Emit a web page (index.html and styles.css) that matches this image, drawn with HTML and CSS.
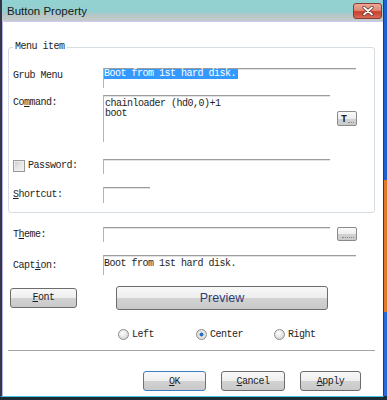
FILE: index.html
```html
<!DOCTYPE html>
<html lang="en">
<head>
<meta charset="UTF-8">
<title>Button Property</title>
<link rel="stylesheet" href="styles.css">
</head>
<body>
<div class="window">
    <div class="titlebar">
        <span class="title">Button Property</span>
        <span class="close">
            <svg width="14" height="10" viewBox="0 0 14 10">
                <path d="M3 1.5 L11 8.5 M11 1.5 L3 8.5" stroke="#5a2a24" stroke-width="3.2" stroke-linecap="round"/>
                <path d="M3 1.5 L11 8.5 M11 1.5 L3 8.5" stroke="#fff" stroke-width="1.8" stroke-linecap="round"/>
            </svg>
        </span>
    </div>

    <div class="content">
        <fieldset class="group">
            <legend>Menu item</legend>

            <div class="row row-grub">
                <label class="lbl">Grub Menu</label>
                <div class="edit wide"><span class="sel">Boot from 1st hard disk.</span></div>
            </div>

            <div class="row row-cmd">
                <label class="lbl">Co<u>m</u>mand:</label>
                <div class="edit area">chainloader (hd0,0)+1<br>boot</div>
                <button class="tiny t-btn">T<span class="dots"></span></button>
            </div>

            <div class="row row-pass">
                <label class="lbl check-lbl"><span class="checkbox"></span>Password:</label>
                <div class="edit medium"></div>
            </div>

            <div class="row row-short">
                <label class="lbl"><u>S</u>hortcut:</label>
                <div class="edit short"></div>
            </div>
        </fieldset>

        <div class="outer">
            <div class="row row-theme">
                <label class="lbl">T<u>h</u>eme:</label>
                <div class="edit medium"></div>
                <button class="tiny"><span class="dots"></span></button>
            </div>

            <div class="row row-caption">
                <label class="lbl">Capt<u>i</u>on:</label>
                <div class="edit wide caption">Boot from 1st hard disk.</div>
            </div>
        </div>

        <div class="btn-row">
            <button class="btn font-btn"><u>F</u>ont</button>
            <button class="btn preview-btn">Preview</button>
        </div>

        <div class="radios">
            <span class="radio"><span class="dot"></span>Left</span>
            <span class="radio"><span class="dot on"></span>Center</span>
            <span class="radio"><span class="dot"></span>Right</span>
        </div>

        <div class="separator"></div>

        <div class="actions">
            <button class="btn ok"><u>O</u>K</button>
            <button class="btn cancel"><u>C</u>ancel</button>
            <button class="btn apply"><u>A</u>pply</button>
        </div>
    </div>
</div>
</body>
</html>
```

FILE: styles.css
```css
body {
    margin: 0;
    height: 400px;
    background: linear-gradient(#1f5fd0 0, #1f5fd0 45%, #e07a2a 45%, #e07a2a 78%, #2a6ad8 78%, #2a6ad8 99%, #1e2a35 99%);
    font-family: "Liberation Mono", monospace;
    font-size: 10px;
    letter-spacing: -0.5px;
    color: #1e1e1e;
    overflow: hidden;
}
.window {
    width: 381px;
    height: 396px;
    background: #fff;
    border-left: 2px solid #34344a;
    border-right: 1px solid #2a3a60;
    border-bottom: 1px solid #46c6e0;
    box-shadow: inset 1px 0 0 #b4b4e4;
}
.titlebar {
    height: 21px;
    display: flex;
    align-items: center;
    justify-content: space-between;
    padding: 0 1px 0 5px;
    background: linear-gradient(#92d2d2 0, #94cfcf 55%, #b7c6c6 72%, #c6cbcb 100%);
    border-bottom: 1px solid #cacaf2;
}
.title {
    font-family: "Liberation Sans", Arial, sans-serif;
    font-size: 11.5px;
    letter-spacing: 0;
    color: #1a1a1a;
    padding-top: 1px;
}
.close {
    width: 27px;
    height: 14px;
    margin-top: 1px;
    display: flex;
    align-items: center;
    justify-content: center;
    border: 1px solid #8a3c32;
    border-radius: 3px;
    background: linear-gradient(#eaa898 0, #e08a78 45%, #c8402e 55%, #d86a56 100%);
}
.content {
    padding: 19px 8px 0 6px;
}
.group {
    margin: 0;
    padding: 15px 4px 9px 4px;
    border: 1px solid #d6dde2;
    border-radius: 3px;
}
.group legend {
    padding: 0 2px;
    line-height: 12px;
}
.row {
    display: flex;
    align-items: flex-start;
}
.lbl {
    width: 90px;
    flex: none;
    padding-top: 3px;
    line-height: 10px;
}
.edit {
    box-sizing: border-box;
    border-top: 1px solid #9c9c9c;
    border-left: 1px solid #b4b4b4;
    box-shadow: inset 0 1px 0 #e2e2e2;
    line-height: 10px;
}
.wide {
    width: 253px;
    height: 20px;
}
.medium {
    width: 227px;
    height: 15px;
}
.short {
    width: 47px;
    height: 16px;
}
.area {
    width: 227px;
    height: 47px;
    padding: 3px 0 0 1px;
}
.sel {
    display: inline-block;
    padding: 0 2px 0 0;
    line-height: 10px;
    background: #3399ff;
    color: #fff;
}
.row-grub { height: 27px; }
.row-cmd { height: 64px; }
.row-pass { height: 28px; }
.row-short { height: 16px; }

.tiny {
    box-sizing: border-box;
    width: 20px;
    height: 14px;
    margin-left: 7px;
    padding: 0 0 0 3px;
    border: 1px solid #8a8a8a;
    border-radius: 2px;
    background: linear-gradient(#fafafa 0, #ededed 50%, #d2d2d2 50%, #cacaca 100%);
    font-family: "Liberation Mono", monospace;
    font-size: 10px;
    font-weight: bold;
    line-height: 11px;
    color: #222;
    display: flex;
    align-items: flex-end;
    text-align: left;
}
.t-btn {
    margin-top: 16px;
    height: 15px;
}
.dots {
    flex: 1;
    height: 1px;
    margin: 0 2px 2px 1px;
    border-bottom: 1px dotted #8a8a8a;
}
.check-lbl {
    display: flex;
    align-items: center;
    padding-top: 1px;
}
.checkbox {
    box-sizing: border-box;
    width: 12px;
    height: 12px;
    margin-right: 3px;
    border: 1px solid #999;
    background: linear-gradient(135deg, #c8c8c8 0, #e6e6e6 50%, #f6f6f6 100%);
    box-shadow: inset 0 0 0 1px #eee;
}
.outer {
    padding: 14px 5px 0 5px;
}
.row-theme { height: 28px; }
.row-caption { height: 31px; }
.row-caption .lbl { padding-top: 6px; }
.caption {
    padding: 3px 0 0 0;
}
.btn {
    box-sizing: border-box;
    border: 1px solid #6c6c6c;
    border-radius: 3px;
    background: linear-gradient(#f8f8f8 0, #eeeeee 48%, #d2d2d2 52%, #c9c9c9 100%);
    font-family: "Liberation Mono", monospace;
    font-size: 10px;
    letter-spacing: -0.5px;
    color: #1e1e1e;
    padding: 0;
}
.btn-row {
    height: 23px;
    display: flex;
    align-items: center;
}
.font-btn {
    width: 67px;
    height: 20px;
    margin-left: 2px;
}
.preview-btn {
    width: 212px;
    height: 24px;
    margin-left: 39px;
    font-family: "Liberation Sans", Arial, sans-serif;
    font-size: 12.5px;
    letter-spacing: 0;
    color: #2c3c78;
}
.radios {
    display: flex;
    align-items: center;
    height: 12px;
    margin-top: 19px;
    padding-left: 110px;
}
.radio {
    display: flex;
    align-items: center;
    width: 78px;
}
.dot {
    box-sizing: border-box;
    width: 11px;
    height: 11px;
    margin-right: 3px;
    border: 1px solid #8c8c8c;
    border-radius: 50%;
    background: radial-gradient(circle at 40% 35%, #ffffff 0, #e8e8e8 45%, #c6c6c6 100%);
}
.dot.on {
    background: radial-gradient(circle, #1e7ad8 0, #2a6ab8 28%, #d8d8d8 34%, #e8e8e8 60%, #c6c6c6 100%);
}
.separator {
    margin-top: 10px;
    height: 1px;
    background: #a4a4a4;
}
.actions {
    display: flex;
    justify-content: flex-end;
    gap: 15px;
    margin-top: 20px;
    padding-right: 14px;
}
.actions .btn {
    height: 20px;
}
.ok {
    width: 63px;
    border-color: #3c7fc0;
}
.cancel {
    width: 64px;
}
.apply {
    width: 61px;
}
```
